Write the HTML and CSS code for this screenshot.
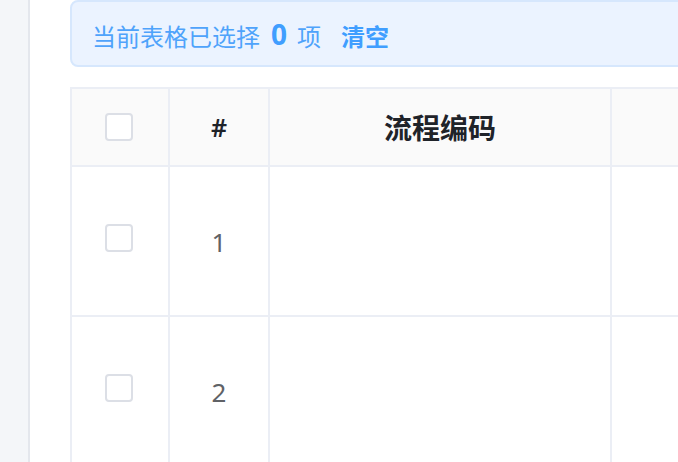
FILE: index.html
```html
<!DOCTYPE html>
<html lang="zh">
<head>
<meta charset="utf-8">
<link rel="stylesheet" href="styles.css">
</head>
<body>
<div class="page">
  <aside class="side"></aside>
  <main class="main">
    <div class="alert">
      <span class="alert-text">当前表格已选择</span>
      <span class="count">0</span>
      <span class="alert-text">项</span>
      <a class="clear">清空</a>
    </div>
    <div class="table">
      <div class="row head">
        <div class="cell c-check"><span class="checkbox"></span></div>
        <div class="cell c-idx">#</div>
        <div class="cell c-code">流程编码</div>
        <div class="cell c-rest"></div>
      </div>
      <div class="row body">
        <div class="cell c-check"><span class="checkbox"></span></div>
        <div class="cell c-idx">1</div>
        <div class="cell c-code"></div>
        <div class="cell c-rest"></div>
      </div>
      <div class="row body">
        <div class="cell c-check"><span class="checkbox"></span></div>
        <div class="cell c-idx">2</div>
        <div class="cell c-code"></div>
        <div class="cell c-rest"></div>
      </div>
    </div>
  </main>
</div>
</body>
</html>
```
FILE: styles.css
```css
html, body {
  margin: 0;
  padding: 0;
  background: #ffffff;
  font-family: "Noto Sans", "Noto Sans CJK SC", sans-serif;
}
.page {
  display: flex;
  width: 678px;
  height: 462px;
  overflow: hidden;
}
.side {
  flex: 0 0 28px;
  background: #f4f6f9;
  border-right: 2px solid #e4e7ed;
}
.main {
  flex: 1;
  padding-left: 40px;
  overflow: hidden;
  display: flex;
  flex-direction: column;
  gap: 20px;
}
.alert {
  width: 700px;
  height: 63px;
  box-sizing: content-box;
  border: 2px solid #d6e7fd;
  border-radius: 8px;
  background: #ebf3ff;
  display: flex;
  align-items: center;
  padding: 0 0 0 20px;
  flex-shrink: 0;
  color: #409eff;
}
.alert-text {
  font-family: "Noto Sans CJK SC", sans-serif;
  font-size: 24px;
  color: #4fa3fb;
  line-height: 1;
  padding-top: 4px;
}
.count {
  font-family: "Noto Sans", sans-serif;
  font-weight: 700;
  font-size: 28px;
  margin: 0 10px 0 11px;
  line-height: 1;
  padding-top: 0;
}
.clear {
  font-family: "Noto Sans CJK SC", sans-serif;
  font-weight: 700;
  font-size: 24px;
  line-height: 1;
  margin-left: 20px;
  padding-top: 4px;
  color: #409eff;
}
.table {
  width: 800px;
  border-top: 2px solid #ebeef5;
  border-left: 2px solid #ebeef5;
  flex-shrink: 0;
}
.row {
  display: flex;
}
.row.head {
  height: 78px;
  background: #fafafa;
}
.row.body {
  height: 150px;
}
.cell {
  box-sizing: border-box;
  border-right: 2px solid #ebeef5;
  border-bottom: 2px solid #ebeef5;
  display: flex;
  align-items: center;
  justify-content: center;
}
.c-check { flex: 0 0 98px; }
.c-idx { flex: 0 0 100px; }
.c-code { flex: 0 0 342px; }
.c-rest { flex: 1; }
.checkbox {
  width: 28px;
  height: 28px;
  box-sizing: border-box;
  border: 2px solid #dcdfe6;
  border-radius: 4px;
  background: #fff;
}
.head .checkbox { margin-left: -2px; }
.body .checkbox { margin-bottom: 6px; margin-left: -2px; }
.head .cell {
  color: #1f2329;
  font-weight: 700;
  font-size: 24px;
}
.head .c-idx {
  font-family: "Noto Sans", sans-serif;
  font-size: 25px;
  font-weight: 600;
}
.head .c-code {
  font-family: "Noto Sans CJK SC", sans-serif;
  font-size: 28px;
}
.body .c-idx {
  color: #606266;
  font-family: "Noto Sans", sans-serif;
  font-size: 26px;
  padding-top: 2px;
}
```
